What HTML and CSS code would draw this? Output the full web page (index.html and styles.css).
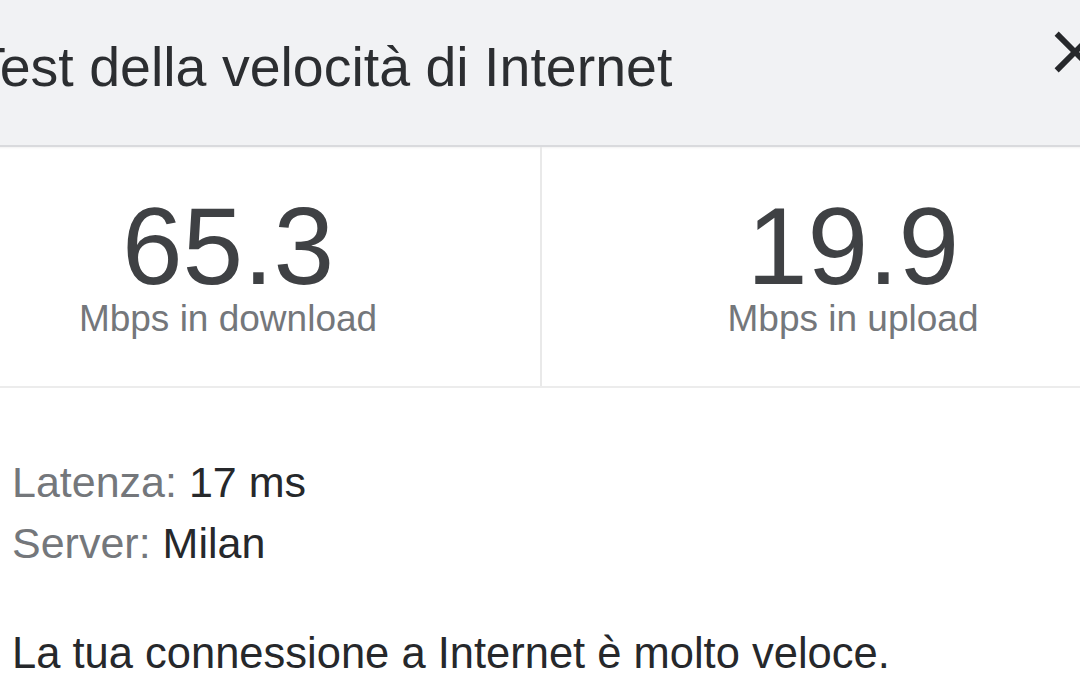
FILE: index.html
```html
<!DOCTYPE html>
<html lang="it">
<head>
  <meta charset="UTF-8">
  <meta name="viewport" content="width=device-width, initial-scale=1.0">
  <title>Test della velocità di Internet</title>
  <link rel="stylesheet" href="styles.css">
</head>
<body>

<div class="speed-card">
  <!-- Header -->
  <header class="card-header">
    <h1 class="card-title">Test della velocità di Internet</h1>
    <button class="close-btn" aria-label="Chiudi">
      <svg viewBox="0 0 24 24" width="70" height="70">
        <path d="M19 6.41L17.59 5 12 10.59 6.41 5 5 6.41 10.59 12 5 17.59 6.41 19 12 13.41 17.59 19 19 17.59 13.41 12z"></path>
      </svg>
    </button>
  </header>

  <!-- Results -->
  <section class="results">
    <div class="result">
      <div class="result-value">65.3</div>
      <div class="result-label">Mbps in download</div>
    </div>
    <div class="result">
      <div class="result-value">19.9</div>
      <div class="result-label">Mbps in upload</div>
    </div>
  </section>

  <!-- Details -->
  <section class="details">
    <p class="detail"><span class="detail-key">Latenza:</span> 17 ms</p>
    <p class="detail"><span class="detail-key">Server:</span> Milan</p>
    <p class="summary">La tua connessione a Internet è molto veloce.</p>
  </section>
</div>

</body>
</html>
```

FILE: styles.css
```css
* {
  margin: 0;
  padding: 0;
  box-sizing: border-box;
}

body {
  font-family: "Liberation Sans", Arial, sans-serif;
  background-color: #fff;
  overflow: hidden;
}

/* card is wider than the window, cropped on both sides */
.speed-card {
  width: 1248px;
  margin-left: -84px;
}

.card-header {
  display: flex;
  align-items: flex-start;
  height: 147px;
  padding: 17px 54px 0 56px;
  background-color: #f1f2f4;
  border-bottom: 2px solid #d9dadd;
  box-shadow: 0 1px 2px rgba(0, 0, 0, 0.06);
}

.card-title {
  margin-top: 23px;
  font-size: 55.5px;
  line-height: 55px;
  font-weight: normal;
  color: #2c2e31;
}

.close-btn {
  margin-left: auto;
  background: none;
  border: none;
  line-height: 0;
}

.close-btn svg {
  fill: #26282b;
}

.results {
  display: grid;
  grid-template-columns: 624px 624px;
  border-bottom: 2px solid #ececec;
}

.result {
  height: 239px;
  padding-top: 45px;
  text-align: center;
}

.result + .result {
  border-left: 2px solid #e9e9e9;
}

.result-value {
  font-size: 109px;
  line-height: 109px;
  color: #3f4144;
}

.result-label {
  margin-top: -1px;
  font-size: 37px;
  line-height: 37px;
  color: #74777b;
}

.details {
  padding: 64px 0 0 96px;
}

.detail {
  font-size: 43px;
  line-height: 61px;
  color: #26282b;
}

.detail-key {
  color: #74777b;
}

.summary {
  margin-top: 49px;
  font-size: 43.5px;
  line-height: 61px;
  color: #26282b;
}
```
